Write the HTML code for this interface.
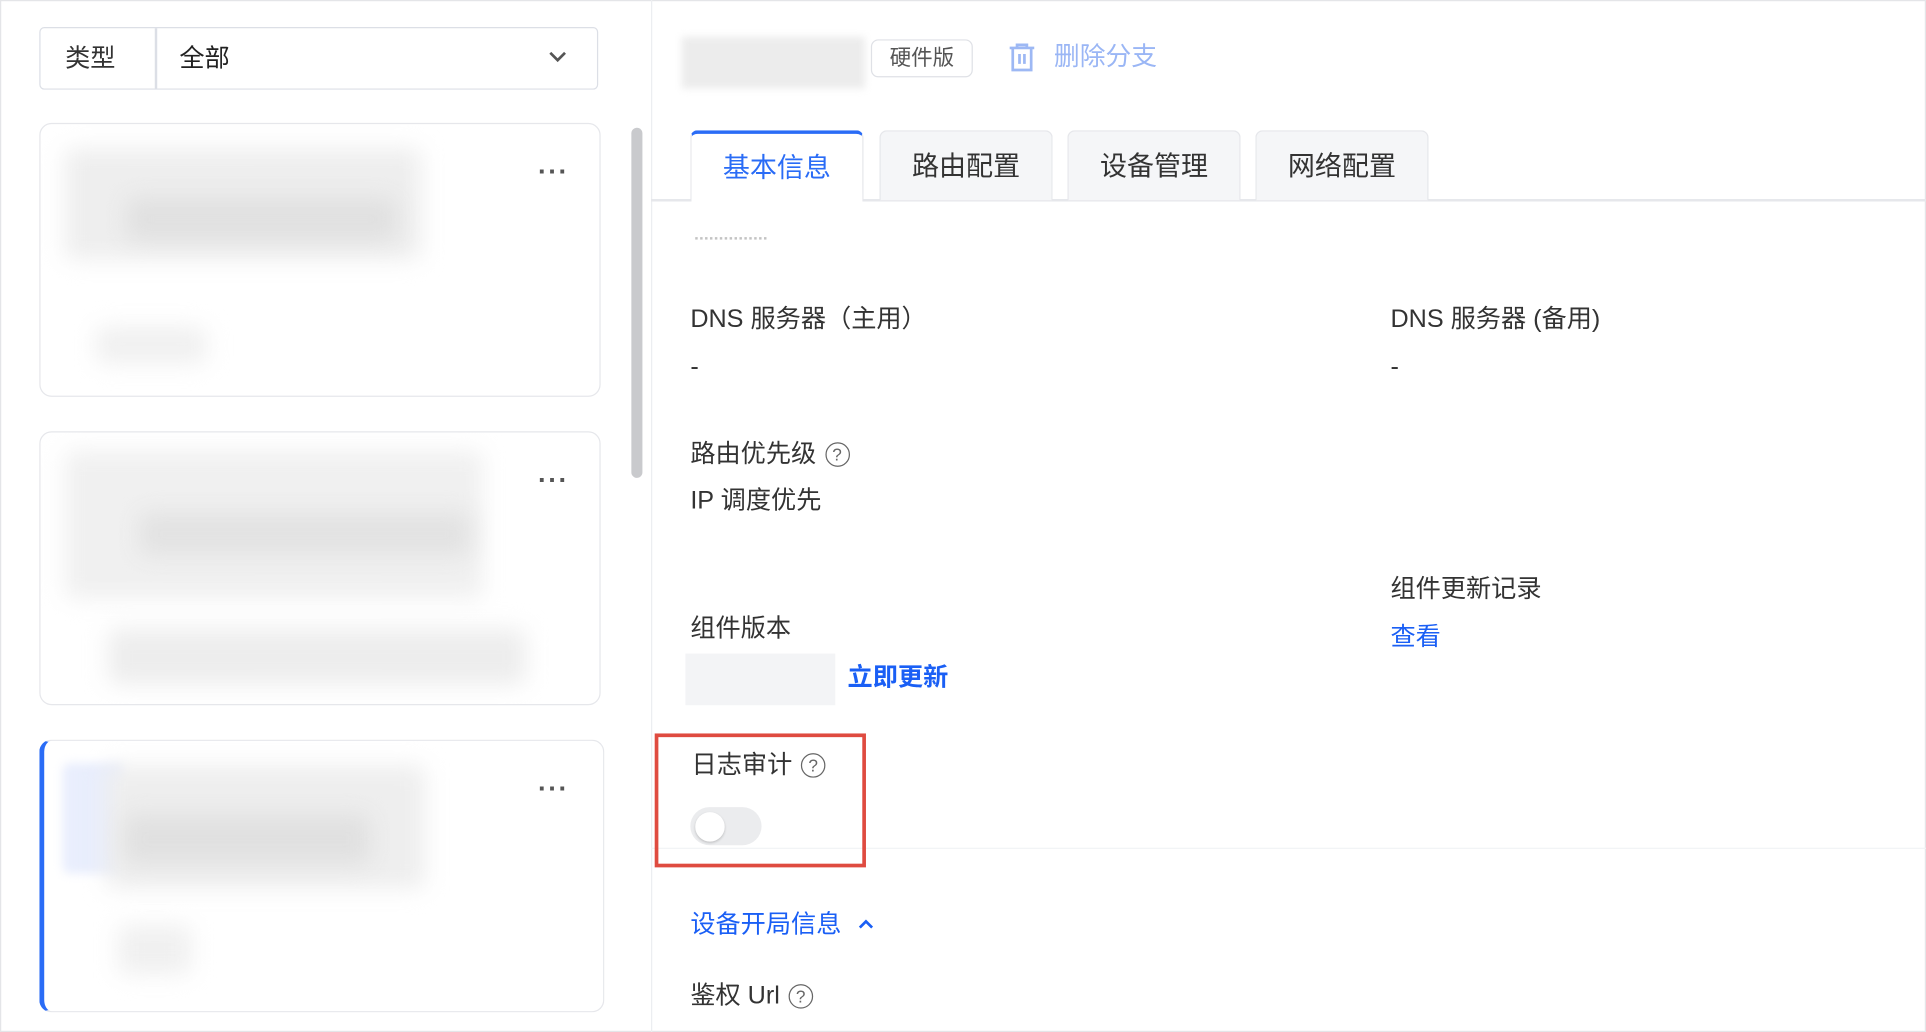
<!DOCTYPE html>
<html><head><meta charset="utf-8"><style>
html,body{margin:0;padding:0;width:1926px;height:1032px;overflow:hidden;background:#fff}
#w{position:absolute;left:0;top:0;width:1568px;height:840px;transform:scale(1.22832,1.22857);transform-origin:0 0;font-family:"Liberation Sans","Noto Sans CJK SC",sans-serif;color:#333}
.a{position:absolute;white-space:nowrap}
.t{font-size:20.5px;line-height:22px}
.blur{position:absolute;background:#ddd;filter:blur(9px);border-radius:6px}
.card{position:absolute;left:32px;width:455px;border:1.5px solid #e6e7eb;border-radius:10px;background:#fff;overflow:hidden}
.dots{position:absolute;left:405px;top:26px;font-size:22px;font-weight:bold;color:#555;letter-spacing:1px}
.tab{position:absolute;top:106px;height:57px;width:141px;background:#f5f6f8;border:1.5px solid #e6e7eb;border-bottom:none;border-radius:6px 6px 0 0;box-sizing:border-box;font-size:22px;text-align:center;line-height:58px;color:#333}
.q{display:inline-block;width:18px;height:18px;border:1.6px solid #666;border-radius:50%;font-size:14px;line-height:18px;text-align:center;color:#666;vertical-align:1px;margin-left:7px;box-sizing:content-box}
</style></head><body><div id="w">
<div class="a" style="left:0;top:0;width:1566px;height:838px;border:1px solid #e4e5e8"></div>
<div class="a" style="left:530px;top:0;width:1px;height:840px;background:#eceef1"></div>
<div class="a" style="left:32px;top:22px;width:453px;height:49px;border:1.5px solid #dcdfe6;border-radius:4px"></div>
<div class="a" style="left:126px;top:23px;width:1.5px;height:49px;background:#dcdfe6"></div>
<div class="a t" style="left:53px;top:37px">类型</div>
<div class="a t" style="left:146px;top:37px;color:#222">全部</div>
<svg class="a" style="left:446px;top:40px" width="16" height="12"><path d="M2 3l6 6 6-6" stroke="#555" stroke-width="2.2" fill="none"/></svg>
<div class="card" style="top:100px;height:221px">
 <div class="blur" style="left:20px;top:20px;width:290px;height:90px;background:#eeeeee"></div>
 <div class="blur" style="left:70px;top:60px;width:220px;height:35px;background:#e0e0e0"></div>
 <div class="blur" style="left:45px;top:165px;width:90px;height:30px;background:#f0f0f0"></div>
 <div class="dots">···</div>
</div>
<div class="card" style="top:351px;height:221px">
 <div class="blur" style="left:20px;top:15px;width:340px;height:120px;background:#f0f0f0"></div>
 <div class="blur" style="left:80px;top:65px;width:270px;height:35px;background:#e2e2e2"></div>
 <div class="blur" style="left:55px;top:160px;width:340px;height:45px;background:#ededed"></div>
 <div class="dots">···</div>
</div>
<div class="card" style="top:602px;height:220px;border-left:4px solid #2a6cf6">
 <div class="blur" style="left:15px;top:18px;width:50px;height:90px;background:#e9eefd;filter:blur(4px)"></div>
 <div class="blur" style="left:50px;top:20px;width:260px;height:100px;background:#eeeeee"></div>
 <div class="blur" style="left:65px;top:60px;width:200px;height:40px;background:#e0e0e0"></div>
 <div class="blur" style="left:60px;top:150px;width:60px;height:40px;background:#f0f0f0"></div>
 <div class="dots" style="left:402px">···</div>
</div>
<div class="a" style="left:514px;top:104px;width:9px;height:285px;background:#c9cacd;border-radius:5px"></div>
<div class="blur" style="left:555px;top:30px;width:149px;height:42px;background:#ececec;filter:blur(3px);border-radius:0"></div>
<div class="a" style="left:709px;top:32px;width:81px;height:29px;border:1.5px solid #dfe1e6;border-radius:6px;font-size:17.5px;line-height:29px;text-align:center;color:#555">硬件版</div>
<svg class="a" style="left:821px;top:35px" width="22" height="24"><path d="M1 4h20M7 4V1.5h8V4M3.5 5v17h15V5M9 9v8M13 9v8" stroke="#9db8f4" stroke-width="2.2" fill="none"/></svg>
<div class="a" style="left:858px;top:35px;font-size:21px;line-height:24px;color:#9ab6f5">删除分支</div>
<div class="a" style="left:530px;top:162px;width:1038px;height:1.5px;background:#e6e7eb"></div>
<div class="tab" style="left:562px;background:#fff;border-top:3px solid #2a6cf6;color:#2a6cf6;height:58px;line-height:55px">基本信息</div>
<div class="tab" style="left:716px">路由配置</div>
<div class="tab" style="left:869px">设备管理</div>
<div class="tab" style="left:1022px">网络配置</div>
<div class="a" style="left:566px;top:193px;width:58px;height:3px;border-top:2px dotted #888;opacity:.5"></div>
<div class="a t" style="left:562px;top:249px">DNS 服务器（主用）</div>
<div class="a t" style="left:562px;top:288px">-</div>
<div class="a t" style="left:1132px;top:249px">DNS 服务器 (备用)</div>
<div class="a t" style="left:1132px;top:288px">-</div>
<div class="a t" style="left:562px;top:359px">路由优先级<span class="q">?</span></div>
<div class="a t" style="left:562px;top:397px">IP 调度优先</div>
<div class="a t" style="left:1132px;top:469px">组件更新记录</div>
<div class="a t" style="left:1132px;top:508px;color:#1a5ff5">查看</div>
<div class="a t" style="left:562px;top:501px">组件版本</div>
<div class="a" style="left:558px;top:532px;width:122px;height:42px;background:#f3f4f6"></div>
<div class="a t" style="left:690px;top:541px;color:#1a5ff5;font-weight:bold">立即更新</div>
<div class="a" style="left:530px;top:690px;width:1038px;height:1px;background:#f2f3f5"></div>
<div class="a" style="left:533px;top:597px;width:166px;height:103px;border:3px solid #df4b40"></div>
<div class="a t" style="left:563px;top:612px">日志审计<span class="q">?</span></div>
<div class="a" style="left:562px;top:657px;width:58px;height:31px;background:#ebecee;border-radius:16px"></div>
<div class="a" style="left:566px;top:661px;width:24px;height:24px;background:#fff;border-radius:50%;box-shadow:0 1px 2px rgba(0,0,0,.2)"></div>
<div class="a t" style="left:562px;top:742px;color:#1a5ff5">设备开局信息</div>
<svg class="a" style="left:698px;top:747px" width="14" height="12"><path d="M2 8l5-5 5 5" stroke="#1a5ff5" stroke-width="2.2" fill="none"/></svg>
<div class="a t" style="left:562px;top:800px">鉴权 Url<span class="q">?</span></div>
</div></body></html>
